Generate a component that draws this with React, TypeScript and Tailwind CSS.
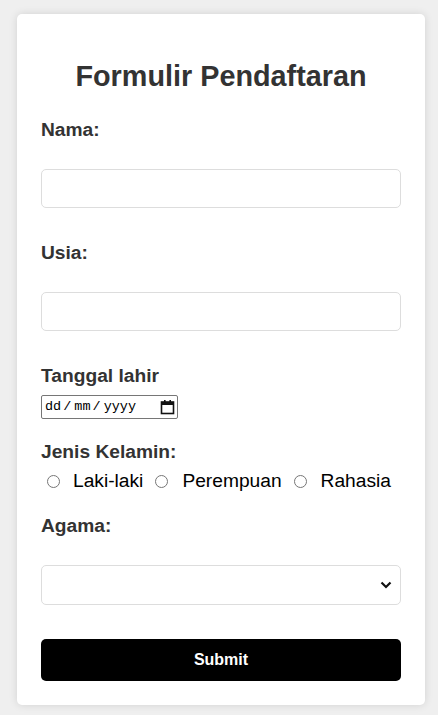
import React from "react";

function Label({ children, className = "" }: { children: React.ReactNode; className?: string }) {
  return (
    <label className={`block text-[19.2px] font-bold leading-[22px] text-[#333] ${className}`}>{children}</label>
  );
}

export default function App() {
  return (
    <div className="min-h-[715px] bg-[#efefef] pt-[14px] pb-[10px] font-['Liberation_Sans',Arial,sans-serif]">
      <div className="ml-[17px] w-[408px] rounded-[5px] bg-white px-[24px] pt-[24px] pb-[24px] shadow-[0_0_8px_rgba(0,0,0,0.12)]">
        <h2 className="mt-[22px] text-center text-[28.8px] font-bold leading-[33px] text-[#333]">
          Formulir Pendaftaran
        </h2>

        <Label className="mt-[26px]">Nama:</Label>
        <input type="text" className="mt-[28px] block h-[39px] w-full rounded-[5px] border border-[#ddd] px-[10px] outline-none" />

        <Label className="mt-[34px]">Usia:</Label>
        <input type="text" className="mt-[28px] block h-[39px] w-full rounded-[5px] border border-[#ddd] px-[10px] outline-none" />

        <Label className="mt-[34px]">Tanggal lahir</Label>
        <div className="mt-[8px] flex h-[24px] w-[137px] items-center rounded-[2px] border border-[#767676] pl-[3px] font-['Liberation_Mono',monospace] text-[13.5px] leading-none text-black">
          <span>dd</span>
          <span className="ml-[2px]">/</span>
          <span className="ml-[3px]">mm</span>
          <span className="ml-[2px]">/</span>
          <span className="ml-[3px]">yyyy</span>
          <svg className="ml-[24px]" width="15" height="16" viewBox="0 0 15 16">
            <rect x="1.5" y="3" width="12" height="11.5" fill="none" stroke="#111" strokeWidth="1.6" />
            <rect x="1.5" y="3" width="12" height="3" fill="#111" />
            <rect x="4" y="1" width="1.6" height="3" fill="#111" />
            <rect x="9.4" y="1" width="1.6" height="3" fill="#111" />
          </svg>
        </div>

        <Label className="mt-[22px]">Jenis Kelamin:</Label>
        <div className="mt-[7px] flex items-start text-[19.2px] leading-[22px] text-black">
          <input type="radio" name="jk" className="ml-[6px] mt-[5px] h-[13px] w-[13px]" />
          <span className="ml-[13px]">Laki-laki</span>
          <input type="radio" name="jk" className="ml-[12px] mt-[5px] h-[13px] w-[13px]" />
          <span className="ml-[14px]">Perempuan</span>
          <input type="radio" name="jk" className="ml-[12px] mt-[5px] h-[13px] w-[13px]" />
          <span className="ml-[14px]">Rahasia</span>
        </div>

        <Label className="mt-[23px]">Agama:</Label>
        <div className="relative mt-[28px] h-[40px] w-full">
          <select className="block h-[40px] w-full appearance-none rounded-[5px] border border-[#ddd] bg-white px-[10px] outline-none">
            <option></option>
          </select>
          <svg
            className="pointer-events-none absolute right-[9px] top-[15px]"
            width="12"
            height="10"
            viewBox="0 0 12 10"
          >
            <path d="M1.5 2.5 L6 7 L10.5 2.5" fill="none" stroke="#111" strokeWidth="2.2" />
          </svg>
        </div>

        <button className="mt-[34px] block h-[42px] w-full rounded-[5px] bg-black text-[16px] font-bold text-white">
          Submit
        </button>
      </div>
    </div>
  );
}
